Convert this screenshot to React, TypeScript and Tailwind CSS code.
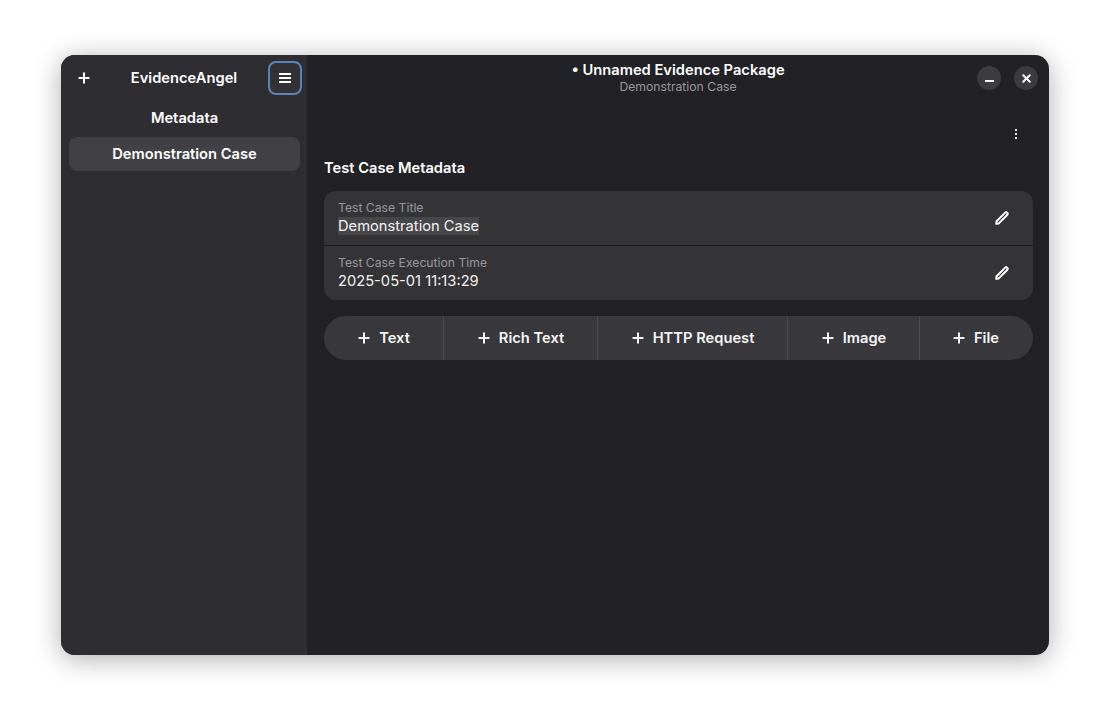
import { Plus, X } from "lucide-react";

function PencilIcon() {
  return (
    <svg width="16" height="16" viewBox="0 0 16 16" fill="none" aria-hidden>
      <path
        d="M2.2 13.8l.4-2.6 8.6-8.6a1.3 1.3 0 0 1 1.8 0l.4.4a1.3 1.3 0 0 1 0 1.8l-8.6 8.6-2.6.4Z"
        stroke="white"
        strokeWidth="2"
        strokeLinejoin="round"
      />
    </svg>
  );
}

function MetaRow({ label, value, selected }: { label: string; value: string; selected?: boolean }) {
  return (
    <div className="flex h-[54px] items-center justify-between pl-[14px] pr-[23px]">
      <div className="flex flex-col">
        <span className="text-[12.2px] leading-[15px] text-[#98989a]">{label}</span>
        <span className="mt-[1px] text-[14.7px] leading-[20px] text-[#f2f2f2]">
          <span className={selected ? "bg-[#47474a]" : ""}>{value}</span>
        </span>
      </div>
      <PencilIcon />
    </div>
  );
}

function AddButton({ label, width, last }: { label: string; width: string; last?: boolean }) {
  return (
    <button
      type="button"
      className={`flex h-full items-center justify-center gap-[7px] text-[14.7px] font-semibold text-[#f5f5f5] ${width} ${last ? "pr-[3px]" : "border-r border-[#4c4c50] pr-[1px]"}`}
    >
      <Plus size={16} strokeWidth={3} />
      {label}
    </button>
  );
}

export default function App() {
  return (
    <div className="flex h-[722px] w-[1110px] justify-center bg-white pt-[55px] font-['Inter',sans-serif]">
      <div className="flex h-[600px] w-[988px] overflow-hidden rounded-[14px] bg-[#222226] shadow-[0_4px_28px_rgba(0,0,0,0.32)]">
        {/* sidebar */}
        <aside className="flex w-[246px] flex-col bg-[#2e2e32] pl-[8px] pr-[7px] text-white">
          <div className="flex h-[46px] items-center justify-between">
            <button type="button" className="flex w-[30px] justify-center">
              <Plus size={16} strokeWidth={3} />
            </button>
            <span className="ml-[1px] text-[14.7px] font-semibold">EvidenceAngel</span>
            <button
              type="button"
              className="-mr-[2px] flex h-[34px] w-[34px] items-center justify-center rounded-[8px] border-2 border-[#5b83b8] bg-[#323236]"
            >
              <span className="flex h-[10px] w-[12px] flex-col justify-between">
                <span className="h-[2px] bg-white" />
                <span className="h-[2px] bg-white" />
                <span className="h-[2px] bg-white" />
              </span>
            </button>
          </div>
          <div className="mt-[3px] h-[28px] text-center text-[14.7px] font-semibold leading-[28px]">Metadata</div>
          <div className="mt-[5px] flex h-[34px] items-center justify-center rounded-[8px] bg-[#414145] text-[14.7px] font-semibold">
            Demonstration Case
          </div>
        </aside>

        {/* main */}
        <main className="flex flex-1 flex-col text-white">
          <header className="flex h-[46px] items-center">
            <div className="w-[72px]" />
            <div className="flex flex-1 flex-col items-center">
              <span className="text-[14.7px] font-semibold leading-[18px]">• Unnamed Evidence Package</span>
              <span className="text-[12.2px] leading-[16px] text-[#98989a]">Demonstration Case</span>
            </div>
            <div className="flex w-[72px] gap-[13px] pr-[11px]">
              <button type="button" className="flex h-[24px] w-[24px] shrink-0 items-end justify-center rounded-full bg-[#3c3c40] pb-[8px]">
                <span className="h-[2px] w-[9px] bg-white" />
              </button>
              <button type="button" className="flex h-[24px] w-[24px] shrink-0 items-center justify-center rounded-full bg-[#3c3c40]">
                <X size={13} strokeWidth={3.6} />
              </button>
            </div>
          </header>

          <div className="flex flex-col pl-[17px] pr-[16px]">
            <div className="mt-[26px] flex h-[14px] justify-end pr-[16px]">
              <span className="flex flex-col items-center justify-center gap-[2px]">
                <span className="h-[2px] w-[2px] bg-[#e8e8e8]" />
                <span className="h-[2px] w-[2px] bg-[#e8e8e8]" />
                <span className="h-[2px] w-[2px] bg-[#e8e8e8]" />
              </span>
            </div>
            <h2 className="mt-[17px] text-[14.7px] font-semibold leading-[20px]">Test Case Metadata</h2>
            <div className="mt-[13px] overflow-hidden rounded-[12px] bg-[#343437]">
              <MetaRow label="Test Case Title" value="Demonstration Case" selected />
              <div className="h-px bg-[#1f1f22]" />
              <MetaRow label="Test Case Execution Time" value="2025-05-01 11:13:29" />
            </div>
            <div className="mt-[16px] flex h-[44px] overflow-hidden rounded-full bg-[#39393d]">
              <AddButton label="Text" width="w-[120px]" />
              <AddButton label="Rich Text" width="w-[154px]" />
              <AddButton label="HTTP Request" width="w-[190px]" />
              <AddButton label="Image" width="w-[132px]" />
              <AddButton label="File" width="flex-1" last />
            </div>
          </div>
        </main>
      </div>
    </div>
  );
}
